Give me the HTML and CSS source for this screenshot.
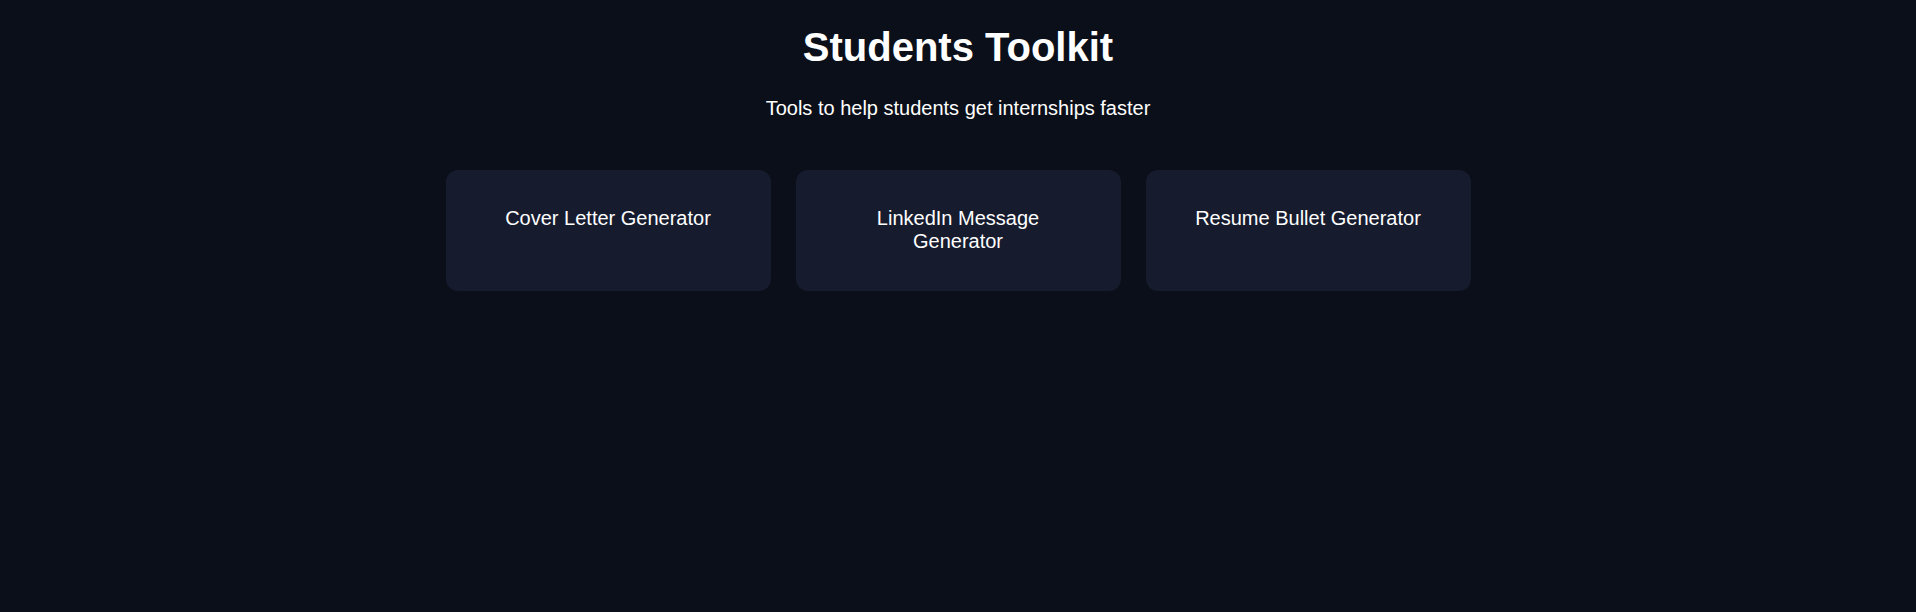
FILE: index.html
```html
<!DOCTYPE html>
<html lang="en">
<head>
  <meta charset="UTF-8" />
  <meta name="viewport" content="width=device-width, initial-scale=1.0"/>
  <title>Students Toolkit</title>
  <link rel="stylesheet" href="styles.css">
</head>
<body>

  <div class="page">
    <h1>Students Toolkit</h1>
    <p class="subtitle">Tools to help students get internships faster</p>

    <div class="tools">
      <div class="tool-card">
        <h3>Cover Letter Generator</h3>
      </div>
      <div class="tool-card">
        <h3>LinkedIn Message Generator</h3>
      </div>
      <div class="tool-card">
        <h3>Resume Bullet Generator</h3>
      </div>
    </div>
  </div>

</body>
</html>
```

FILE: styles.css
```css
body {
  font-family: "Liberation Sans", Arial, sans-serif;
  margin: 0;
  background-color: #0b0f19;
  color: #fff;
}

.page {
  padding-top: 25px;
  text-align: center;
}

h1 {
  margin: 0;
  font-size: 40px;
  font-weight: bold;
}

.subtitle {
  margin: 27px 0 0;
  font-size: 20px;
}

.tools {
  display: grid;
  grid-template-columns: repeat(3, 325px);
  gap: 25px;
  justify-content: center;
  margin-top: 50px;
}

.tool-card {
  background-color: #161b2e;
  border-radius: 12px;
  padding: 37px 40px 38px;
}

.tool-card h3 {
  margin: 0;
  font-size: 20px;
  font-weight: normal;
}
```
